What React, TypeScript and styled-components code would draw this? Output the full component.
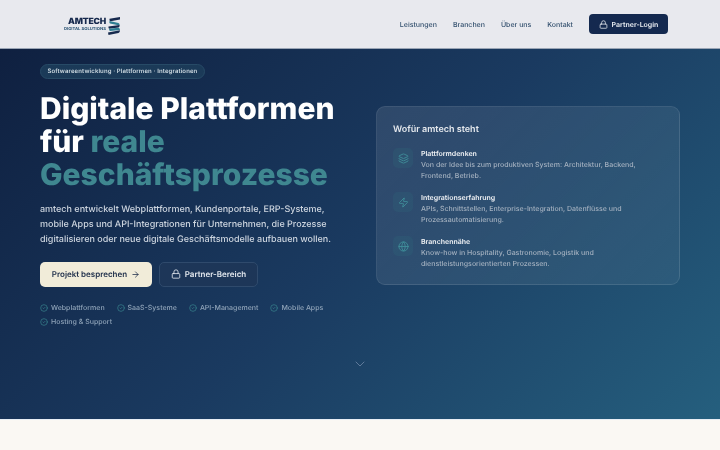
import { ArrowRight, ChevronDown, CircleCheck, Globe, Layers, Lock, Zap } from "lucide-react";
import styled, { createGlobalStyle } from "styled-components";

const GlobalStyle = createGlobalStyle`
  html, body {
    margin: 0;
    padding: 0;
    background: #faf8f3;
    font-family: Inter, "Liberation Sans", sans-serif;
    text-rendering: geometricPrecision;
  }
  * { box-sizing: border-box; }
`;

const Page = styled.div`
  width: 720px;
  height: 450px;
  overflow: hidden;
  display: flex;
  flex-direction: column;
  will-change: transform;
`;

const Header = styled.header`
  height: 49px;
  flex: none;
  display: flex;
  align-items: center;
  justify-content: space-between;
  padding: 0 52px 0 64px;
  background: #e8e9ee;
  border-bottom: 1px solid #9aa5b5;
`;

const Logo = styled.div`
  display: flex;
  align-items: center;
  gap: 2px;
  margin-top: 4px;
`;

const LogoText = styled.div`
  display: flex;
  flex-direction: column;
  align-items: flex-end;
  margin-top: -2px;
`;

const LogoName = styled.span`
  font-size: 8.6px;
  line-height: 9px;
  font-weight: 900;
  letter-spacing: -0.2px;
  color: #16294d;
`;

const LogoSub = styled.span`
  font-size: 4.2px;
  line-height: 5px;
  font-weight: 700;
  color: #2a5474;
  white-space: nowrap;
`;

const Nav = styled.nav`
  display: flex;
  align-items: center;
  gap: 16px;
`;

const NavLink = styled.a`
  font-size: 7px;
  font-weight: 500;
  color: #33506e;
`;

const LoginButton = styled.a`
  display: flex;
  align-items: center;
  justify-content: center;
  gap: 4px;
  width: 79px;
  height: 20px;
  border-radius: 4px;
  background: #14294f;
  color: #e9edf2;
  font-size: 7px;
  font-weight: 600;
`;

const Hero = styled.section`
  height: 370px;
  flex: none;
  position: relative;
  padding: 15px 40px 0;
  display: grid;
  grid-template-columns: minmax(0, 1fr) minmax(0, 1fr);
  gap: 32px;
  align-items: start;
  background: linear-gradient(135deg, #0f2040 0%, #1a3a60 50%, #255f7e 100%);
`;

const Left = styled.div`
  display: flex;
  flex-direction: column;
  align-items: flex-start;
`;

const Pill = styled.div`
  height: 15px;
  padding: 0 6.5px;
  display: flex;
  align-items: center;
  border-radius: 8px;
  background: #1b3a58;
  border: 1px solid #274a66;
  color: #cfdbe2;
  font-size: 6px;
  letter-spacing: 0.12px;
  font-weight: 600;
`;

const Title = styled.h1`
  margin: 14px 0 0;
  font-size: 30px;
  line-height: 33px;
  font-weight: 800;
  color: #fff;
`;

const TitleLine = styled.span`
  display: block;
`;

const Accent = styled.span`
  color: #3f8790;
`;

const Lead = styled.p`
  margin: 9.5px 0 0;
  font-size: 9px;
  line-height: 15.3px;
  font-weight: 450;
  color: #cdd5df;
`;

const Actions = styled.div`
  margin-top: 14.6px;
  display: flex;
  gap: 7px;
`;

const PrimaryButton = styled.a`
  width: 112px;
  height: 25px;
  display: flex;
  align-items: center;
  justify-content: center;
  gap: 4px;
  border-radius: 5px;
  background: #f1ecd9;
  color: #1c2c48;
  font-size: 8px;
  font-weight: 600;
`;

const SecondaryButton = styled.a`
  width: 99px;
  height: 25px;
  display: flex;
  align-items: center;
  justify-content: center;
  gap: 4px;
  border-radius: 5px;
  background: #1d3658;
  border: 1px solid #2f4a6c;
  color: #e3e8ee;
  font-size: 8px;
  font-weight: 600;
`;

const Tags = styled.ul`
  list-style: none;
  margin: 16px 0 0;
  padding: 0;
  display: flex;
  flex-wrap: wrap;
  gap: 4px 12px;
`;

const Tag = styled.li`
  display: flex;
  align-items: center;
  gap: 3px;
  height: 10px;
  font-size: 7px;
  font-weight: 450;
  color: #8fa3b8;
  svg { color: #3a8790; }
`;

const Card = styled.div`
  margin-top: 42px;
  height: 179px;
  padding: 16px;
  border-radius: 9px;
  background: linear-gradient(135deg, rgba(255, 255, 255, 0.1) 0%, rgba(255, 255, 255, 0.05) 100%);
  border: 1px solid rgba(255, 255, 255, 0.09);
`;

const CardTitle = styled.h2`
  margin: 0 0 12px;
  font-size: 9px;
  line-height: 13px;
  font-weight: 600;
  color: #e4e8ed;
`;

const Feature = styled.div`
  display: flex;
  gap: 8px;
  height: 44px;
`;

const FeatureIcon = styled.div`
  flex: none;
  width: 20px;
  height: 20px;
  display: flex;
  align-items: center;
  justify-content: center;
  border-radius: 5px;
  background: rgba(45, 125, 135, 0.15);
  color: #3f8d99;
`;

const FeatureTitle = styled.div`
  font-size: 7px;
  line-height: 11px;
  font-weight: 600;
  color: #f0f2f5;
`;

const FeatureText = styled.div`
  margin-top: 1px;
  font-size: 7px;
  line-height: 10.5px;
  font-weight: 450;
  color: #a3b0bf;
`;

const ScrollHint = styled.div`
  position: absolute;
  left: 352px;
  top: 307px;
  color: #5f7a9a;
  display: flex;
`;

const Rest = styled.div`
  flex: 1;
  background: #faf8f3;
  border-top: 1px solid #e8eef5;
`;

const tags = ["Webplattformen", "SaaS-Systeme", "API-Management", "Mobile Apps", "Hosting & Support"];

const features = [
  {
    icon: Layers,
    title: "Plattformdenken",
    text: "Von der Idee bis zum produktiven System: Architektur, Backend, Frontend, Betrieb.",
  },
  {
    icon: Zap,
    title: "Integrationserfahrung",
    text: "APIs, Schnittstellen, Enterprise-Integration, Datenflüsse und Prozessautomatisierung.",
  },
  {
    icon: Globe,
    title: "Branchennähe",
    text: "Know-how in Hospitality, Gastronomie, Logistik und dienstleistungsorientierten Prozessen.",
  },
];

const LogoMark = () => (
  <svg width="12" height="18" viewBox="0 0 12 18" fill="none">
    <path d="M1.5 1.8 Q1 4 2.5 4.2 L12 2.5 V0 Z" fill="#16294d" />
    <path d="M1.5 4 L10.5 6 Q12 6.5 11.5 8.5 L2 6.5 Q1 6 1.5 4 Z" fill="#2f7f93" />
    <path d="M0.5 9.5 L11.5 8 Q12 10 10.5 10.4 L1 11.8 Q0.2 11 0.5 9.5 Z" fill="#16294d" />
    <path d="M1 11.8 L10.5 10.8 Q12 11 12 13 L2 14 Q1 13.5 1 11.8 Z" fill="#2f7f93" />
    <path d="M0 15.5 L12 13.2 Q12 15.5 10.5 16 L0.5 18 Z" fill="#16294d" />
  </svg>
);

export default function App() {
  return (
    <Page>
      <GlobalStyle />
      <Header>
        <Logo>
          <LogoText>
            <LogoName>AMTECH</LogoName>
            <LogoSub>DIGITAL SOLUTIONS</LogoSub>
          </LogoText>
          <LogoMark />
        </Logo>
        <Nav>
          <NavLink>Leistungen</NavLink>
          <NavLink>Branchen</NavLink>
          <NavLink>Über uns</NavLink>
          <NavLink>Kontakt</NavLink>
          <LoginButton>
            <Lock size={9} />
            Partner-Login
          </LoginButton>
        </Nav>
      </Header>
      <Hero>
        <Left>
          <Pill>Softwareentwicklung · Plattformen · Integrationen</Pill>
          <Title>
            <TitleLine>Digitale Plattformen</TitleLine>
            <TitleLine>
              für <Accent>reale</Accent>
            </TitleLine>
            <TitleLine>
              <Accent>Geschäftsprozesse</Accent>
            </TitleLine>
          </Title>
          <Lead>
            amtech entwickelt Webplattformen, Kundenportale, ERP-Systeme, mobile Apps und
            API-Integrationen für Unternehmen, die Prozesse digitalisieren oder neue digitale
            Geschäftsmodelle aufbauen wollen.
          </Lead>
          <Actions>
            <PrimaryButton>
              Projekt besprechen
              <ArrowRight size={9} />
            </PrimaryButton>
            <SecondaryButton>
              <Lock size={10} />
              Partner-Bereich
            </SecondaryButton>
          </Actions>
          <Tags>
            {tags.map((tag) => (
              <Tag key={tag}>
                <CircleCheck size={8} />
                {tag}
              </Tag>
            ))}
          </Tags>
        </Left>
        <Card>
          <CardTitle>Wofür amtech steht</CardTitle>
          {features.map(({ icon: Icon, title, text }) => (
            <Feature key={title}>
              <FeatureIcon>
                <Icon size={11} />
              </FeatureIcon>
              <div>
                <FeatureTitle>{title}</FeatureTitle>
                <FeatureText>{text}</FeatureText>
              </div>
            </Feature>
          ))}
        </Card>
        <ScrollHint>
          <ChevronDown size={16} strokeWidth={1.5} />
        </ScrollHint>
      </Hero>
      <Rest />
    </Page>
  );
}
